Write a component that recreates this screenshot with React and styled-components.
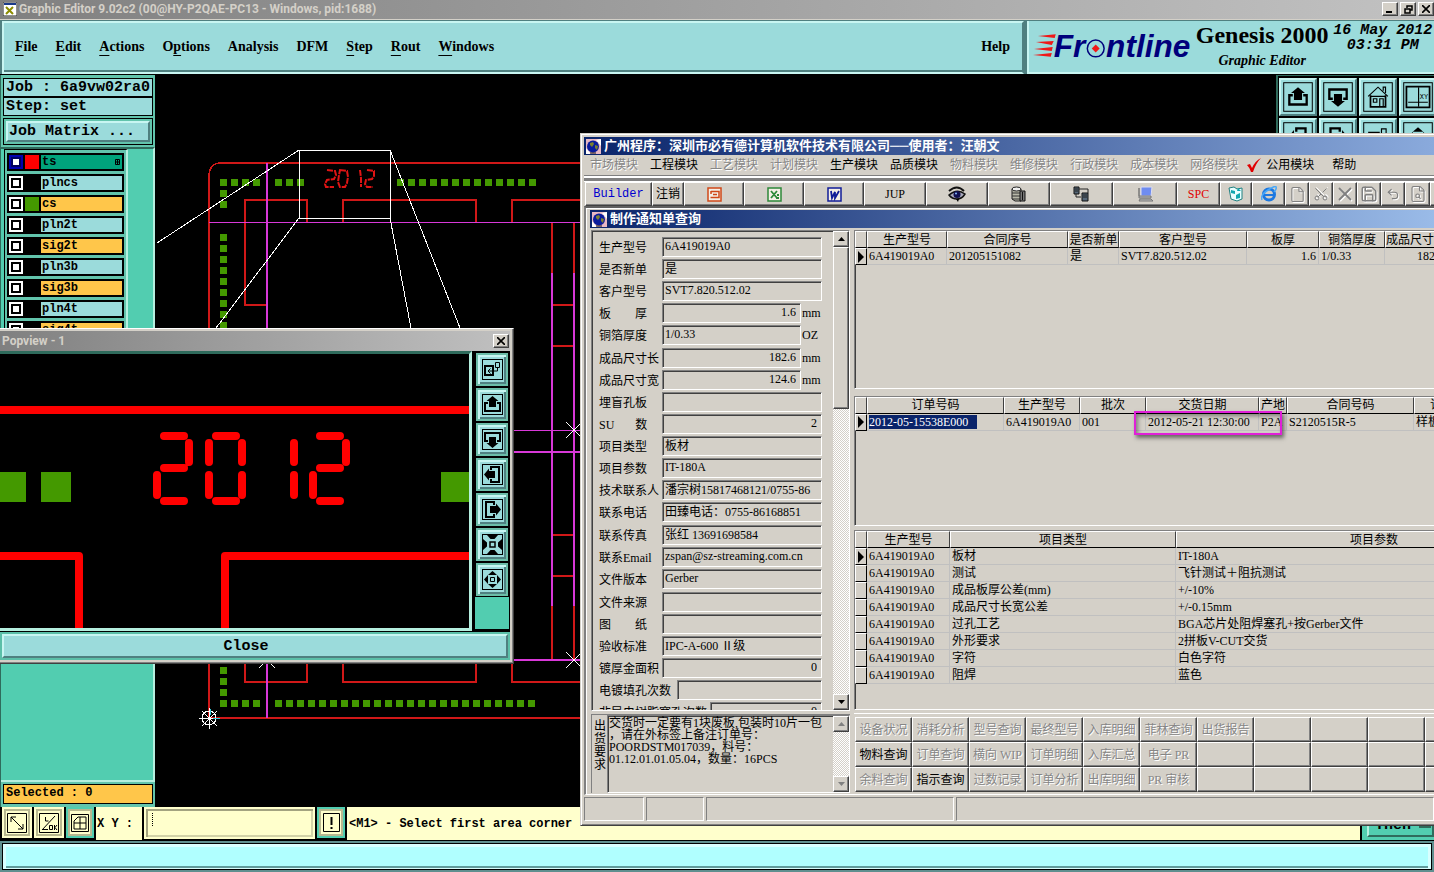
import React from "react";
import styled, { createGlobalStyle, css } from "styled-components";
import { File, Scissors, X, Save, Undo2, FileSearch, FilePlus } from "lucide-react";

const GlobalStyle = createGlobalStyle`
  * {
    box-sizing: border-box;
  }
  html, body, #root {
    margin: 0;
    height: 100%;
  }
  body {
    overflow: hidden;
    background: #000;
    color: #000;
  }
  button, input, textarea {
    font: inherit;
    color: inherit;
    margin: 0;
    padding: 0;
    border: none;
    border-radius: 0;
    background: none;
  }
`;

const aqua = "#9bdbdb";
const teal = "#52cdb0";
const face = "#d4d0c8";
const cream = "#ffffcc";
const song = `"Liberation Serif", "Noto Sans CJK SC", serif`;
const mono = `"Liberation Mono", monospace`;

const raised = css`
  border: 2px solid;
  border-color: #c8f6f2 #4f8080 #4f8080 #c8f6f2;
`;

const winRaised = css`
  border: 1px solid;
  border-color: #fff #404040 #404040 #fff;
  box-shadow: inset -1px -1px 0 #808080;
`;

const sunken = css`
  border: 1px solid;
  border-color: #808080 #fff #fff #808080;
  box-shadow: inset 1px 1px 0 #404040;
`;

const Page = styled.div`
  position: relative;
  display: flex;
  flex-direction: column;
  height: 100vh;
  overflow: hidden;
  font-family: ${mono};
`;

/* ---------- top of the editor ---------- */

const TitleBar = styled.div`
  display: flex;
  align-items: center;
  flex: none;
  height: 20px;
  padding: 0 0 1px 3px;
  gap: 2px;
  background: linear-gradient(90deg, #808080, #c2c2c2);
  border-bottom: 1px solid #d4d0c8;
  color: ${face};
  font: bold 12px/18px Roboto, sans-serif;
  white-space: nowrap;
`;

const TitleText = styled.span`
  flex: 1;
`;

const CaptionButton = styled.button`
  display: flex;
  align-items: center;
  justify-content: center;
  flex: none;
  width: 16px;
  height: 14px;
  background: ${face};
  ${winRaised}
`;

const Header = styled.div`
  display: flex;
  flex: none;
  height: 55px;
  background: #4f8080;
  border-bottom: 1px solid #000;
`;

const MenuBar = styled.nav`
  display: flex;
  align-items: center;
  flex: 1;
  margin: 1px 3px 0 2px;
  padding: 0 12px 2px 11px;
  gap: 18px;
  background: ${aqua};
  border: 2px solid;
  border-color: #c8f6f2 #4f8080 #c8f6f2 #c8f6f2;
  box-shadow: inset 0 -2px 0 #4f8080;
  font: bold 14px/18px "Liberation Serif", serif;
`;

const MenuButton = styled.button`
  margin-left: ${({ $end }) => ($end ? "auto" : "0")};
  u {
    text-underline-offset: 4px;
  }
`;

const Brand = styled.div`
  display: flex;
  flex: none;
  width: 407px;
  margin-top: 1px;
  padding-left: 4px;
  background: ${aqua};
  border-left: 2px solid #c8f6f2;
  border-bottom: 2px solid #c8f6f2;
  white-space: nowrap;
`;

const Product = styled.div`
  display: flex;
  flex-direction: column;
  align-items: center;
  width: 140px;
  font: bold 24px/28px "Liberation Serif", serif;
  em {
    font-size: 14px;
    line-height: 24px;
  }
`;

const Clock = styled.div`
  width: 104px;
  padding-top: 2px;
  text-align: center;
  font: italic bold 15px/15px ${mono};
`;

/* ---------- editor body ---------- */

const Main = styled.main`
  display: flex;
  flex: 1;
  min-height: 0;
  background: #000;
`;

const Side = styled.aside`
  display: flex;
  flex-direction: column;
  flex: none;
  width: 155px;
  margin-right: 1px;
  padding: 3px 2px 3px 2px;
  border-left: 1px solid #2f6b5c;
  background: #62c4ac;
`;

const Info = styled.div`
  height: ${({ $h }) => $h || 19}px;
  padding-left: 2px;
  border: 1px solid #000;
  background: ${({ $bg }) => $bg || aqua};
  font: bold ${({ $small }) => ($small ? "12px" : "15px")} / 17px ${mono};
  white-space: nowrap;
`;

const MatrixFrame = styled.div`
  margin-top: 2px;
  padding: 2px;
  border: 1px solid #000;
`;

const MatrixButton = styled.button`
  display: block;
  width: 100%;
  height: 21px;
  padding-left: 1px;
  background: ${aqua};
  ${raised}
  font: bold 15px/17px ${mono};
  text-align: left;
`;

const LayerArea = styled.div`
  display: flex;
  flex: 1;
  min-height: 0;
  margin: 2px -2px 2px -2px;
  border-top: 2px solid #2f6b5c;
  border-right: 2px solid #b5efdf;
  border-bottom: 2px solid #b5efdf;
  background: ${teal};
`;

const LayerList = styled.ul`
  display: flex;
  flex-direction: column;
  gap: 3px;
  width: 124px;
  height: max-content;
  margin: 0 0 0 3px;
  padding: 3px 2px;
  list-style: none;
  border: 1px solid #000;
  border-right: 2px solid #b5efdf;
  background: #62c4ac;
`;

const LayerRow = styled.li`
  display: flex;
  gap: 2px;
  height: 18px;
  padding: 2px;
  background: #000;
`;

const LayerCheck = styled.input`
  appearance: none;
  width: 14px;
  height: 14px;
  border: 2px solid ${({ $active }) => ($active ? "#0000b0" : "#fff")};
  background: #fff;
  box-shadow: inset 0 0 0 2px ${({ $active }) => ($active ? "#000060" : "#000")};
`;

const Swatch = styled.span`
  width: 14px;
  height: 14px;
  background: ${({ $color }) => $color};
`;

const LayerName = styled.label`
  display: flex;
  justify-content: space-between;
  flex: 1;
  padding: 0 2px 0 1px;
  background: ${({ $bg }) => $bg};
  font: bold 12px/14px ${mono};
`;

const Canvas = styled.svg`
  flex: 1;
  min-width: 0;
  height: 100%;
  background: #000;
`;

const Palette = styled.div`
  display: grid;
  grid-template-columns: repeat(4, 38px);
  grid-auto-rows: 38px;
  gap: 2px;
  flex: none;
  width: 158px;
  padding: 2px 0 0 1px;
  overflow: hidden;
  background: #000;
  border-top: 1px solid #2f6b5c;
  border-left: 2px solid #2f6b5c;
`;

const ToolButton = styled.button`
  display: flex;
  align-items: center;
  justify-content: center;
  background: ${aqua};
  ${raised}
`;

/* ---------- status rows ---------- */

const Prompt = styled.div`
  display: flex;
  flex: none;
  height: 33px;
  padding-left: 2px;
  gap: 2px;
  background: #000;
  font: bold 12px/16px ${mono};
`;

const PromptButton = styled.button`
  display: flex;
  align-items: center;
  justify-content: center;
  flex: none;
  width: ${({ $on }) => ($on ? 28 : 30)}px;
  height: 31px;
  background: ${cream};
  border: 2px solid ${({ $on }) => ($on ? teal : cream)};
  outline: 2px solid #b8b890;
  outline-offset: -4px;
`;

const PromptLabel = styled.label`
  display: flex;
  align-items: center;
  width: 46px;
  padding-left: 1px;
  background: ${cream};
`;

const CoordInput = styled.input`
  width: 171px;
  height: 32px;
  padding: 0 6px;
  /* dotted insertion mark */
  background: repeating-linear-gradient(#000 0 1px, ${cream} 1px 2px) 6px 4px / 1px 14px no-repeat, ${cream};
  border: 2px solid ${cream};
  box-shadow: inset 2px 2px 0 #a3a380, inset -2px -2px 0 #d3d3a8;
`;

const Message = styled.div`
  display: flex;
  align-items: center;
  flex: 1;
  padding-left: 2px;
  background: ${cream};
`;

const ThenBox = styled.div`
  width: 72px;
  padding: 0 0 3px 5px;
  background: ${teal};
`;

const ThenButton = styled.button`
  display: flex;
  align-items: center;
  gap: 8px;
  width: 100%;
  height: 100%;
  padding: 7px 0 0 6px;
  border: 2px solid;
  border-color: #b5efdf #2f6b5c #2f6b5c #b5efdf;
  font: bold 15px/18px ${mono};
`;

const Footer = styled.div`
  flex: none;
  height: 32px;
  padding: 2px;
  background: #5f8f8f;
  border-top: 1px solid #000;
`;

const FooterBar = styled.div`
  height: 27px;
  border: 1px solid #000;
  background: #d8ffff;
  padding: 3px;
  &::before {
    content: "";
    display: block;
    height: 19px;
    background: #b0ffff;
    border-bottom: 2px solid #5f9c9c;
  }
`;

/* ---------- popview window ---------- */

const Popview = styled.section`
  position: absolute;
  left: -4px;
  top: 328px;
  width: 518px;
  height: 336px;
  display: flex;
  flex-direction: column;
  padding: 2px 3px 3px;
  background: ${face};
  ${winRaised}
`;

const PopTitle = styled.div`
  display: flex;
  align-items: center;
  justify-content: space-between;
  flex: none;
  height: 20px;
  padding: 0 1px 0 2px;
  background: linear-gradient(90deg, #808080, #c0c0c0);
  color: ${face};
  font: bold 12px/18px Roboto, sans-serif;
`;

const PopBody = styled.div`
  display: flex;
  flex: 1;
  min-height: 0;
  gap: 2px;
  background: #000;
`;

const PopCanvas = styled.svg`
  flex: 1;
  min-width: 0;
  height: 100%;
  background: #000;
  border: 3px solid;
  border-color: #2f6b5c #b5efdf #b5efdf #000;
  border-left-width: 0;
`;

const PopTools = styled.div`
  display: flex;
  flex-direction: column;
  gap: 2px;
  width: 36px;
  padding: 1px 1px 0;
  border: 1px solid #000;
  border-bottom: 2px solid #000;
  background: linear-gradient(#000 245px, ${teal} 245px);
`;

const PopTool = styled.button`
  display: flex;
  align-items: center;
  justify-content: center;
  flex: none;
  height: 33px;
  background: ${aqua};
  border: 2px solid #6bbda8;
  box-shadow: inset 2px 2px 0 #c8f6f2, inset -2px -2px 0 #4f8080;
`;

const CloseFrame = styled.div`
  flex: none;
  padding: 2px;
  background: #5bbfa8;
  border-top: 1px solid #000;
`;

const CloseButton = styled.button`
  display: block;
  width: 100%;
  height: 24px;
  padding: 2px 18px 0 0;
  background: ${aqua};
  ${raised}
  font: bold 15px/18px ${mono};
`;

/* ---------- order query window ---------- */

const Erp = styled.section`
  position: absolute;
  left: 580px;
  right: 0;
  top: 133px;
  height: 693px;
  display: flex;
  flex-direction: column;
  padding: 3px 0 3px 3px;
  overflow: hidden;
  background: ${face};
  border: 1px solid ${face};
  border-right: none;
  border-bottom-color: #404040;
  box-shadow: inset 1px 1px 0 #fff, inset 0 -1px 0 #808080;
  font: 12px/14px ${song};
  white-space: nowrap;
`;

const BlueTitle = styled.div`
  display: flex;
  align-items: center;
  gap: 3px;
  flex: none;
  height: 18px;
  padding-left: 2px;
  background: linear-gradient(90deg, #0a246a, ${({ $to }) => $to});
  color: #fff;
  font-size: 13px;
  font-weight: bold;
`;

const ErpMenu = styled.nav`
  display: flex;
  align-items: center;
  gap: 12px;
  flex: none;
  height: 20px;
  padding-left: 6px;
`;

const ErpMenuItem = styled.button`
  display: flex;
  align-items: center;
  gap: 4px;
  &:disabled {
    color: #868686;
    text-shadow: 1px 1px 0 #fff;
  }
  svg {
    margin-left: -4px;
  }
`;

const Rule = styled.div`
  flex: none;
  height: 7px;
  border-top: 1px solid #808080;
  border-bottom: 1px solid #fff;
  background: linear-gradient(#fff 2px, #808080 2px, #808080 5px, #fff 5px);
`;

const ErpToolbar = styled.div`
  display: flex;
  flex: none;
  height: 24px;
  padding-left: 1px;
`;

const ErpTool = styled.button`
  display: flex;
  align-items: center;
  justify-content: center;
  flex: none;
  width: ${({ $w }) => $w}px;
  color: ${({ $color }) => $color || "#000"};
  ${winRaised}
  &:disabled {
    color: #808080;
  }
  &:disabled svg {
    filter: drop-shadow(1px 1px 0 #fff);
  }
`;

const Builder = styled.span`
  font: 12px/14px ${mono};
`;

const Child = styled.div`
  display: flex;
  flex-direction: column;
  flex: 1;
  min-height: 0;
  padding: 2px 0 1px 4px;
  border-top: 2px solid #606060;
  border-left: 2px solid #808080;
  border-bottom: 1px solid #fff;
  box-shadow: inset 1px 1px 0 #fff;
`;

const ChildBody = styled.div`
  display: flex;
  flex: 1;
  min-height: 0;
  gap: 4px;
  padding: 2px 0 0 1px;
`;

const LeftColumn = styled.div`
  display: flex;
  flex-direction: column;
  flex: none;
  gap: 3px;
  width: 259px;
`;

const FormPanel = styled.div`
  display: flex;
  flex: 1;
  min-height: 0;
  overflow: hidden;
  ${sunken}
`;

const FormScroll = styled.div`
  display: flex;
  flex-direction: column;
  gap: 3px;
  flex: 1;
  min-width: 0;
  padding: 6px 11px 0 7px;
`;

const FieldGroup = styled.div`
  display: flex;
  flex-direction: column;
  gap: 2px;
`;

const Field = styled.div`
  display: flex;
  align-items: center;
  height: 20px;
`;

const FieldLabel = styled.label`
  flex: none;
  width: ${({ $w }) => $w || 63}px;
  padding-top: 2px;
  white-space: pre;
`;

const FieldInput = styled.input`
  flex: 1;
  min-width: 0;
  height: 20px;
  padding: 0 4px 2px 2px;
  text-align: ${({ $right }) => ($right ? "right" : "left")};
  ${sunken}
`;

const Unit = styled.span`
  width: 21px;
  padding-left: 1px;
`;

const NotePanel = styled.div`
  display: flex;
  flex: none;
  height: 79px;
  border-top: 1px solid #808080;
  border-left: 1px solid #808080;
`;

const NoteLabel = styled.label`
  width: 15px;
  padding: 5px 0 0 2px;
  white-space: normal;
  line-height: 13px;
`;

const NoteBox = styled.div`
  display: flex;
  flex: 1;
  ${sunken}
`;

const NoteText = styled.textarea`
  flex: 1;
  min-width: 0;
  padding: 1px;
  resize: none;
  overflow: hidden;
  white-space: pre;
  line-height: 12px;
`;

const Scroll = styled.div`
  display: flex;
  flex-direction: column;
  flex: none;
  width: 16px;
  background: repeating-conic-gradient(#fff 0 25%, ${face} 0 50%) 0 0 / 2px 2px;
`;

const ScrollButton = styled.button`
  display: flex;
  align-items: center;
  justify-content: center;
  flex: none;
  height: 16px;
  background: ${face};
  ${winRaised}
  margin-top: ${({ $down }) => ($down ? "auto" : "0")};
  &:disabled {
    color: #808080;
  }
`;

const ScrollThumb = styled.div`
  flex: none;
  height: 162px;
  background: ${face};
  ${winRaised}
`;

const RightColumn = styled.div`
  display: flex;
  flex-direction: column;
  flex: 1;
  min-width: 0;
`;

const GridBox = styled.div`
  position: relative;
  flex: ${({ $grow }) => $grow} 1 0;
  min-height: 0;
  margin-bottom: ${({ $after }) => $after}px;
  overflow: hidden;
  ${sunken}
  border-right: none;
`;

const Table = styled.table`
  width: ${({ $w }) => $w}px;
  table-layout: fixed;
  border-collapse: separate;
  border-spacing: 0;
  th {
    height: 17px;
    padding: 0;
    overflow: hidden;
    font-weight: normal;
    border: 1px solid;
    border-color: #fff #404040 #000 #fff;
  }
  td {
    height: 17px;
    padding: 0 2px 0 2px;
    overflow: hidden;
    border-right: 1px solid #c0c0c0;
    border-bottom: 1px solid #c0c0c0;
  }
  td:first-child {
    padding: 0 0 0 1px;
    border: 1px solid;
    border-color: #fff #000 #000 #fff;
  }
`;

const Cell = styled.td`
  text-align: ${({ $right }) => ($right ? "right" : "left")};
`;

const Pointer = styled.svg`
  display: block;
`;

const Selected = styled.span`
  display: inline-block;
  width: 108px;
  color: #fff;
  background: #0a246a;
`;

const Highlight = styled.div`
  position: absolute;
  left: 279px;
  top: 14px;
  width: 148px;
  height: 24px;
  border: 2px solid #e020d8;
  box-shadow: 2px 3px 4px rgba(0, 0, 0, 0.5), inset 2px 3px 4px rgba(0, 0, 0, 0.4);
`;

const ActionPanel = styled.div`
  flex: none;
  padding: 3px 0 1px 1px;
  overflow: hidden;
  border-top: 1px solid #fff;
`;

const ActionGrid = styled.div`
  display: grid;
  grid-template-columns: repeat(11, 57px);
  grid-auto-rows: 25px;
`;

const ActionButton = styled.button`
  ${winRaised}
  &:disabled {
    color: #868686;
    text-shadow: 1px 1px 0 #fff;
  }
`;

const ErpStatus = styled.div`
  display: flex;
  flex: none;
  gap: 2px;
  height: 27px;
  padding: 2px 0 1px 0;
`;

const StatusCell = styled.div`
  width: ${({ $w }) => $w || 0}px;
  flex: ${({ $w }) => ($w ? "none" : "1")};
  border: 1px solid;
  border-color: #808080 #fff #fff #808080;
`;

/* ---------- data ---------- */

const menus = [
  ["", "F", "ile"],
  ["", "E", "dit"],
  ["", "A", "ctions"],
  ["O", "p", "tions"],
  ["Analysis", "", ""],
  ["DFM", "", ""],
  ["", "S", "tep"],
  ["", "R", "out"],
  ["", "W", "indows"],
];

const orange = "#ffc64a";

const layers = [
  { name: "ts", bg: "#00a37c", color: "#ff0000", active: true },
  { name: "plncs", bg: aqua },
  { name: "cs", bg: orange, color: "#449900" },
  { name: "pln2t", bg: aqua },
  { name: "sig2t", bg: orange },
  { name: "pln3b", bg: aqua },
  { name: "sig3b", bg: orange },
  { name: "pln4t", bg: aqua },
  { name: "sig4t", bg: orange },
];

const erpMenus = [
  ["市场模块", false],
  ["工程模块", true],
  ["工艺模块", false],
  ["计划模块", false],
  ["生产模块", true],
  ["品质模块", true],
  ["物料模块", false],
  ["维修模块", false],
  ["行政模块", false],
  ["成本模块", false],
  ["网络模块", false],
];

const fieldGroups = [
  [
    { label: "生产型号", value: "6A419019A0" },
    { label: "是否新单", value: "是" },
    { label: "客户型号", value: "SVT7.820.512.02" },
    { label: "板　　厚", value: "1.6", unit: "mm", right: true },
    { label: "铜箔厚度", value: "1/0.33", unit: "OZ" },
  ],
  [
    { label: "成品尺寸长", value: "182.6", unit: "mm", right: true },
    { label: "成品尺寸宽", value: "124.6", unit: "mm", right: true },
    { label: "埋盲孔板", value: "" },
    { label: "SU 　  数", value: "2", right: true },
    { label: "项目类型", value: "板材" },
    { label: "项目参数", value: "IT-180A" },
    { label: "技术联系人", value: "潘宗树15817468121/0755-86" },
    { label: "联系电话", value: "田臻电话：0755-86168851" },
  ],
  [
    { label: "联系传真", value: "张红 13691698584" },
    { label: "联系Email", value: "zspan@sz-streaming.com.cn" },
    { label: "文件版本", value: "Gerber" },
  ],
  [
    { label: "文件来源", value: "" },
    { label: "图　　纸", value: "" },
    { label: "验收标准", value: "IPC-A-600 Ⅱ级" },
    { label: "镀厚金面积", value: "0", right: true },
    { label: "电镀填孔次数", value: "", w: 78 },
    { label: "非导电树脂塞孔次数", value: "0", right: true, w: 111 },
  ],
];

const productTable = {
  widths: [12, 80, 121, 51, 128, 72, 66, 62],
  head: ["", "生产型号", "合同序号", "是否新单", "客户型号", "板厚", "铜箔厚度", "成品尺寸长"],
  rows: [["6A419019A0", "201205151082", "是", "SVT7.820.512.02", "1.6", "1/0.33", "182.6"]],
  right: [4, 6],
};

const orderTable = {
  widths: [12, 137, 76, 66, 113, 28, 127, 80],
  head: ["", "订单号码", "生产型号", "批次", "交货日期", "产地", "合同号码", "订单类型"],
  rows: [
    [<Selected key="s">2012-05-15538E000</Selected>, "6A419019A0", "001", "2012-05-21 12:30:00", "P2A", "S2120515R-5", "样板"],
  ],
};

const itemTable = {
  widths: [12, 83, 226, 396],
  head: ["", "生产型号", "项目类型", "项目参数"],
  rows: [
    ["6A419019A0", "板材", "IT-180A"],
    ["6A419019A0", "测试", "飞针测试＋阻抗测试"],
    ["6A419019A0", "成品板厚公差(mm)", "+/-10%"],
    ["6A419019A0", "成品尺寸长宽公差", "+/-0.15mm"],
    ["6A419019A0", "过孔工艺", "BGA芯片处阻焊塞孔+按Gerber文件"],
    ["6A419019A0", "外形要求", "2拼板V-CUT交货"],
    ["6A419019A0", "字符", "白色字符"],
    ["6A419019A0", "阻焊", "蓝色"],
  ],
};

const actions = [
  ["设备状况", "消耗分析", "型号查询", "最终型号", "入库明细", "菲林查询", "出货报告", "", "", "", ""],
  ["物料查询", "订单查询", "横向 WIP", "订单明细", "入库汇总", "电子 PR", "", "", "", "", ""],
  ["余料查询", "指示查询", "过数记录", "订单分析", "出库明细", "PR 审核", "", "", "", "", ""],
];
const enabledActions = ["物料查询", "指示查询"];

const note = `交货时一定要有1块废板,包装时10片一包
，请在外标签上备注订单号：
POORDSTM017039，料号：
01.12.01.01.05.04，数量：16PCS`;

/* ---------- drawings ---------- */

const AppIcon = () => (
  <svg width="14" height="14" viewBox="0 0 14 14">
    <rect width="14" height="14" fill="#fff" stroke="#222" />
    <rect x="1" y="1" width="12" height="2" fill="#1a3a8a" />
    <path d="M3 5l7 7M10 5l-7 7" stroke="#8c8c00" strokeWidth="2" />
  </svg>
);

const CloseGlyph = () => (
  <svg width="8" height="8" viewBox="0 0 8 8">
    <path d="M0 0l8 8M8 0L0 8" stroke="#000" strokeWidth="1.6" />
  </svg>
);

const ArrowGlyph = ({ down }) => (
  <svg width="7" height="4" viewBox="0 0 7 4">
    <path d={down ? "M0 0h7L3.500 4z" : "M0 4h7L3.500 0z"} fill="currentColor" />
  </svg>
);

const GlobeIcon = () => (
  <svg width="15" height="15" viewBox="0 0 15 15">
    <rect width="15" height="15" fill="#e8b8c4" />
    <path d="M0 15V9l5 6zM15 0v7l-5-6z" fill="#fff" />
    <circle cx="7" cy="7.500" r="6" fill="#0a1c9c" />
    <path d="M4 4l3-1 1 2-2 3-2-2zM9 6l3 1-1 4-2-2z" fill="#7b8030" />
    <path d="M4 14h6" stroke="#111" />
  </svg>
);

const FrontlineLogo = () => (
  <svg width="162" height="50" viewBox="1032 22 162 50">
    <path
      d="M1055 35l-18 2 17 2zM1053 42l-18 1 16 3zM1052 48l-19 2 18 2zM1051 54l-19 2 18 2z"
      fill="#f01818"
    />
    <g fill="#00007c" fontFamily="Liberation Sans, sans-serif" fontWeight="bold" fontStyle="italic" fontSize="32">
      <text x="1053" y="58">Fr</text>
      <text x="1106" y="58">ntline</text>
    </g>
    <circle cx="1095.500" cy="49.500" r="8.500" fill="none" stroke="#00007c" strokeWidth="1.500" />
    <path d="M1095.500 45.500l4 4-4 4-4-4z" fill="#f01818" />
  </svg>
);

const boxArrow = (
  <g>
    <path d="M6 9H3v8h15V9h-3" fill="none" stroke="#000" strokeWidth="2" />
    <path d="M10.500 2l6 5H14v6H7V7H4.500z" />
  </g>
);

const viewIcons = {
  popup: (
    <g fill="none" stroke="#000">
      <path d="M3 7h8v9H3z" strokeWidth="2" />
      <path d="M13.500 3.500h4v5h-4zM15.500 8v4H6M8.500 9.500L6 12l2.500 2.500" />
    </g>
  ),
  up: boxArrow,
  down: <g transform="rotate(180 10.500 10.500)">{boxArrow}</g>,
  left: <g transform="rotate(-90 10.500 10.500)">{boxArrow}</g>,
  right: <g transform="rotate(90 10.500 10.500)">{boxArrow}</g>,
  zoomIn: (
    <g>
      <path d="M8 8h5v5H8z" fill="none" stroke="#000" strokeWidth="1.500" />
      <path d="M5 1h11l-3.500 4h-4zM5 20h11l-3.500-4h-4zM1 5v11l4-3.500v-4zM20 5v11l-4-3.500v-4z" />
    </g>
  ),
  zoomOut: (
    <g>
      <path d="M8.500 8.500h4v4h-4z" fill="none" stroke="#000" />
      <path d="M6 6h9l-4.500-4zM6 15h9l-4.500 4zM6 6v9l-4-4.500zM15 6v9l4-4.500z" />
    </g>
  ),
  home: (
    <g fill="none" stroke="#000">
      <path d="M2 10l8.500-8L19 10M15 5V2h2v5" />
      <path d="M4 9v10h13V9" strokeWidth="1.500" />
      <path d="M4 10h13M6.500 12h3v3h-3zM12 19v-7h3v7" />
    </g>
  ),
  coords: (
    <g>
      <path d="M.500 1.500h20v18H.500z" fill="none" stroke="#000" strokeWidth="1.500" />
      <path d="M11 2v17M2 15h17" stroke="#000" />
      <text x="12" y="12" fontSize="6" fontFamily="Liberation Mono">XY</text>
    </g>
  ),
};

const ViewIcon = ({ kind, size = 21 }) => (
  <svg width={size} height={size} viewBox="0 0 21 21">
    <rect x="0.500" y="0.500" width="20" height="20" fill="none" stroke="#000" strokeWidth={21 / size} />
    <g transform={size > 21 ? "translate(2 2) scale(.81)" : undefined}>{viewIcons[kind]}</g>
  </svg>
);

const Squares = ({ points, size = 7 }) =>
  points.map(([x, y]) => <rect key={`${x}-${y}`} x={x} y={y} width={size} height={size} fill="#449900" />);

const run = (from, to, step) => {
  const out = [];
  for (let v = from; v <= to; v += step) out.push(v);
  return out;
};

const pads = [
  ...[220, 231, 242, 253, 275, 286, 297, ...run(397, 530, 11)].map((x) => [x, 179]),
  ...[190, 201, ...run(234, 333, 11), 667, 678, 689].map((y) => [220, y]),
  ...[220, 231, 242, 253, ...run(275, 530, 11)].map((x) => [x, 700]),
];

const cross = (x, y) => `M${x - 8} ${y - 8}l16 16M${x + 8} ${y - 8}l-16 16`;

const BoardView = () => (
  <Canvas>
    {/* board units start at the top left of the whole editor */}
    <g transform="translate(-156 -75)" fill="none" shapeRendering="crispEdges">
      <g stroke="#d01818" strokeWidth="2">
        <path d="M582 163H221Q209 163 209 177V718H582" strokeWidth="1.500" />
        <path d="M267 305H245V200H307V222M343 222V200H476V222M512 222V200H582" />
        <path d="M245 660V682H307V660M343 660V682H476V660M512 660V682H582" />
        <path d="M552 222V273M574 222V273M552 606V660M574 606V660" />
        <path d="M552 305H574M552 346H574M552 535H574M552 576H574" />
      </g>
      <g stroke="#d838d8">
        <path d="M209 222H582M514 430H582" />
        <path d="M267 163V718M552 273V606M574 273V606M514 452H582M514 660H582" strokeWidth="2" />
      </g>
      <Squares points={pads} />
      <g stroke="#fff">
        <path d="M299.500 150.500H390V218.500H299.500Z" />
        <path d="M157 243L299 150M299 218L216 328M390 150L460 328M390 218L411 328" />
        <path d={`${cross(574, 430)}${cross(574, 660)}${cross(267, 660)}`} />
        <path d={`M199 718.500h20M209.500 708v21M202 711l15 15M217 711l-15 15`} />
        <circle cx="209" cy="718" r="7" />
      </g>
      <path d="M210 709v6M213 718.500h7" stroke="#30c8d8" />
    </g>
    <g transform="translate(-156 -75)" fill="none" stroke="#e01414" strokeWidth="2" strokeDasharray="6 1">
      <path d="M327 170l8 1 1 4-2 4-7 1-2 4 1 3 8 0" />
      <path d="M340 170l7 1 1 6-1 6-2 4-5 0-2-5 1-7z" />
      <path d="M360 170l1 8 0 9" />
      <path d="M367 170l7 1 0 5-2 3-6 1-1 4 2 3 6 0" />
    </g>
  </Canvas>
);

const PopBoard = () => (
  <PopCanvas>
    <g transform="translate(0 -354)">
      <g fill="none" stroke="#ff0000" strokeWidth="8" strokeLinejoin="round">
        <path d="M0 410H480M0 556H79V634M225 634V556H480" />
      </g>
      <g fill="#449900">
        <path d="M0 472h26v30H0zM41 472h30v30H41zM441 472h40v30h-40z" />
      </g>
      <path
        d="M164 436h20M189 443v19M164 468h20M157 475v20M164 501h20
           M216 436h20M209 443v19M242 443v19M209 475v20M242 475v20M216 501h20
           M294 443v19M294 475v20
           M320 436h20M346 443v19M320 468h20M313 475v20M320 501h20"
        fill="none"
        stroke="#ff0000"
        strokeWidth="8"
        strokeLinecap="round"
      />
    </g>
  </PopCanvas>
);

const OfficeIcon = ({ color, kind }) => (
  <svg width="15" height="15" viewBox="0 0 15 15">
    <rect x="1" y="1" width="13" height="13" fill="#f4efe6" stroke={color} strokeWidth="1.500" />
    {kind === "P" && <path d="M4 4.500h8v6H3.500M6 7.500h4M4 4v3" fill="none" stroke={color} strokeWidth="1.500" />}
    {kind === "X" && <path d="M4 4l6 7M10 4l-6 7M9 11h3M10 8h2" stroke={color} strokeWidth="1.800" />}
    {kind === "W" && <path d="M4 4l1 7 3-6 0 6 4-7" fill="none" stroke={color} strokeWidth="1.800" />}
  </svg>
);

const EyeIcon = () => (
  <svg width="18" height="16" viewBox="0 0 18 16">
    <path d="M1 5q8-7 15 0" fill="none" stroke="#111" strokeWidth="2" />
    <path d="M1 9q8-7 16-1-3 5-8 5-5 0-8-4z" fill="#aab" stroke="#111" strokeWidth="1.500" />
    <circle cx="9" cy="8.500" r="3.500" fill="#101050" />
    <circle cx="8" cy="7.500" r="1" fill="#8bf" />
    <path d="M8 13l2 3 1-3z" />
  </svg>
);

const DatabaseIcon = () => (
  <svg width="16" height="16" viewBox="0 0 16 16">
    <path d="M1 3v10l3 2h6V3z" fill="#b8b8a8" stroke="#222" />
    <ellipse cx="5.500" cy="3" rx="4.500" ry="2" fill="#eee" stroke="#222" />
    <path d="M1 7h8M1 10h8M1 13h8" stroke="#333" />
    <path d="M9 5h5v10H9zM11.500 6v8" fill="#777" stroke="#111" />
  </svg>
);

const NetworkIcon = () => (
  <svg width="17" height="16" viewBox="0 0 17 16">
    <path d="M1 1h5v7H1zM9 7h6v8H9z" fill="#567" stroke="#111" />
    <path d="M6 3h9v4M3 8v3h5M2 3h3M2 5h3M10 9h4M10 11h4" fill="none" stroke="#222" />
  </svg>
);

const ComputerIcon = () => (
  <svg width="17" height="16" viewBox="0 0 17 16">
    <path d="M4 1h11l-1 9H4z" fill="#6f8cf0" stroke="#dde" />
    <path d="M2 2v8h12v2H2zM3 13h11l2 2H2z" fill="#bbb" stroke="#777" />
    <path d="M5 2h9l-1 7H5z" fill="#6f8cf0" />
  </svg>
);

const RecycleIcon = () => (
  <svg width="16" height="16" viewBox="0 0 16 16">
    <path d="M1 2l5-1 3 2 5-1v11l-5 2-6-2z" fill="#e8ffff" stroke="#208080" />
    <path d="M3 4l4 1v3l-4-1zM8 9l4-2v5l-4 1zM10 2l3 3h-4z" fill="#10a8b0" />
  </svg>
);

const BrowserIcon = () => (
  <svg width="16" height="16" viewBox="0 0 16 16">
    <circle cx="8" cy="8.500" r="5.500" fill="none" stroke="#1c78e0" strokeWidth="3" />
    <path d="M4 9h9" stroke="#1c78e0" strokeWidth="2" />
    <path d="M1 14Q-1 9 7 4t8-3q1 2-2 5" fill="none" stroke="#48a8f8" strokeWidth="1.500" />
  </svg>
);

const CheckMark = () => (
  <svg width="16" height="14" viewBox="0 0 16 14">
    <path d="M1 7l3-1 2 4Q9 3 15 0 10 5 7 14H5Q4 10 1 7z" fill="#e00000" />
  </svg>
);

const tools = [
  { w: 67, name: "Builder", color: "#0000d0", icon: <Builder>Builder</Builder> },
  { w: 32, name: "注销", icon: "注销" },
  { w: 60, name: "PowerPoint", icon: <OfficeIcon color="#d04818" kind="P" /> },
  { w: 60, name: "Excel", icon: <OfficeIcon color="#2c8838" kind="X" /> },
  { w: 60, name: "Word", icon: <OfficeIcon color="#101c98" kind="W" /> },
  { w: 62, name: "JUP", icon: "JUP" },
  { w: 62, name: "View", icon: <EyeIcon /> },
  { w: 62, name: "Database", icon: <DatabaseIcon /> },
  { w: 63, name: "Network", icon: <NetworkIcon /> },
  { w: 64, name: "Computer", icon: <ComputerIcon /> },
  { w: 43, name: "SPC", color: "#e00000", icon: "SPC" },
  { w: 32, name: "Refresh", icon: <RecycleIcon /> },
  { w: 33, name: "Browser", icon: <BrowserIcon /> },
  { w: 24, name: "New", off: true, icon: <File size={17} strokeWidth={1.5} /> },
  { w: 24, name: "Cut", off: true, icon: <Scissors size={16} strokeWidth={1.5} transform="rotate(-90)" /> },
  { w: 24, name: "Delete", off: true, icon: <X size={22} strokeWidth={2} /> },
  { w: 24, name: "Save", off: true, icon: <Save size={18} strokeWidth={2} /> },
  { w: 24, name: "Undo", off: true, icon: <Undo2 size={14} strokeWidth={2} /> },
  { w: 25, name: "Preview", off: true, icon: <FileSearch size={18} strokeWidth={1.5} /> },
  { w: 24, name: "Add", off: true, icon: <FilePlus size={16} strokeWidth={1.5} /> },
];

const DataTable = ({ table }) => (
  <Table $w={table.widths.reduce((a, b) => a + b, 0)}>
    <colgroup>
      {table.widths.map((w, i) => (
        <col key={i} width={w} />
      ))}
    </colgroup>
    <thead>
      <tr>
        {table.head.map((h, i) => (
          <th key={i}>{h}</th>
        ))}
      </tr>
    </thead>
    <tbody>
      {table.rows.map((row, r) => (
        <tr key={r}>
          <td>
            {r === 0 && (
              <Pointer width="8" height="12" viewBox="0 0 8 12">
                <path d="M1 0l6 6-6 6z" />
              </Pointer>
            )}
          </td>
          {row.map((value, i) => (
            <Cell key={i} $right={table.right && table.right.includes(i)}>
              {value}
            </Cell>
          ))}
        </tr>
      ))}
    </tbody>
  </Table>
);

const PopviewWindow = () => (
  <Popview>
    <PopTitle>
      Popview - 1
      <CaptionButton aria-label="Close window">
        <CloseGlyph />
      </CaptionButton>
    </PopTitle>
    <PopBody>
      <PopBoard />
      <PopTools>
        {["popup", "up", "down", "left", "right", "zoomIn", "zoomOut"].map((kind) => (
          <PopTool key={kind} aria-label={kind}>
            <ViewIcon kind={kind} />
          </PopTool>
        ))}
      </PopTools>
    </PopBody>
    <CloseFrame>
      <CloseButton>Close</CloseButton>
    </CloseFrame>
  </Popview>
);

const OrderWindow = () => (
  <Erp>
    <BlueTitle $to="#8aaadc">
      <GlobeIcon />
      广州程序：深圳市必有德计算机软件技术有限公司──使用者：汪朝文
    </BlueTitle>
    <ErpMenu>
      {erpMenus.map(([text, on]) => (
        <ErpMenuItem key={text} disabled={!on}>
          {text}
        </ErpMenuItem>
      ))}
      <ErpMenuItem>
        <CheckMark />
        公用模块
      </ErpMenuItem>
      <ErpMenuItem>&nbsp; 帮助</ErpMenuItem>
    </ErpMenu>
    <Rule />
    <ErpToolbar>
      {tools.map((t) => (
        <ErpTool key={t.name} $w={t.w} $color={t.color} disabled={t.off} aria-label={t.name}>
          {t.icon}
        </ErpTool>
      ))}
    </ErpToolbar>
    <Child>
      <BlueTitle $to="#9abbe8">
        <GlobeIcon />
        制作通知单查询
      </BlueTitle>
      <ChildBody>
        <LeftColumn>
          <FormPanel>
            <FormScroll>
              {fieldGroups.map((group, g) => (
                <FieldGroup key={g}>
                  {group.map((f) => (
                    <Field key={f.label}>
                      <FieldLabel htmlFor={f.label} $w={f.w}>
                        {f.label}
                      </FieldLabel>
                      <FieldInput id={f.label} defaultValue={f.value} $right={f.right} />
                      {f.unit && <Unit>{f.unit}</Unit>}
                    </Field>
                  ))}
                </FieldGroup>
              ))}
            </FormScroll>
            <Scroll>
              <ScrollButton aria-label="Scroll up">
                <ArrowGlyph />
              </ScrollButton>
              <ScrollThumb />
              <ScrollButton $down aria-label="Scroll down">
                <ArrowGlyph down />
              </ScrollButton>
            </Scroll>
          </FormPanel>
          <NotePanel>
            <NoteLabel htmlFor="note">出货要求</NoteLabel>
            <NoteBox>
              <NoteText id="note" defaultValue={note} />
              <Scroll>
                <ScrollButton disabled aria-label="Scroll up">
                  <ArrowGlyph />
                </ScrollButton>
                <ScrollButton $down disabled aria-label="Scroll down">
                  <ArrowGlyph down />
                </ScrollButton>
              </Scroll>
            </NoteBox>
          </NotePanel>
        </LeftColumn>
        <RightColumn>
          <GridBox $grow={159} $after={7}>
            <DataTable table={productTable} />
          </GridBox>
          <GridBox $grow={130} $after={4}>
            <DataTable table={orderTable} />
            <Highlight />
          </GridBox>
          <GridBox $grow={180} $after={3}>
            <DataTable table={itemTable} />
          </GridBox>
          <ActionPanel>
            <ActionGrid>
              {actions.flatMap((row, r) =>
                row.map((text, i) => (
                  <ActionButton key={`${r}-${i}`} disabled={!enabledActions.includes(text)}>
                    {text}
                  </ActionButton>
                ))
              )}
            </ActionGrid>
          </ActionPanel>
        </RightColumn>
      </ChildBody>
    </Child>
    <ErpStatus>
      <StatusCell $w={60} />
      <StatusCell $w={58} />
      <StatusCell $w={248} />
      <StatusCell />
    </ErpStatus>
  </Erp>
);

const App = () => {
  return (
    <Page>
      <GlobalStyle />
      <TitleBar>
        <AppIcon />
        <TitleText>Graphic Editor 9.02c2 (00@HY-P2QAE-PC13 - Windows, pid:1688)</TitleText>
        <CaptionButton aria-label="Minimize">
          <svg width="8" height="8" viewBox="0 0 8 8">
            <path d="M0 6h6v2H0z" />
          </svg>
        </CaptionButton>
        <CaptionButton aria-label="Restore">
          <svg width="9" height="9" viewBox="0 0 9 9">
            <path d="M3 3V1h5v4H6M1 4h5v4H1z" fill="none" stroke="#000" strokeWidth="1.500" />
          </svg>
        </CaptionButton>
        <CaptionButton aria-label="Close">
          <CloseGlyph />
        </CaptionButton>
      </TitleBar>
      <Header>
        <MenuBar>
          {menus.map(([before, key, after]) => (
            <MenuButton key={before + key + after}>
              {before}
              {key && <u>{key}</u>}
              {after}
            </MenuButton>
          ))}
          <MenuButton $end>Help</MenuButton>
        </MenuBar>
        <Brand>
          <FrontlineLogo />
          <Product>
            Genesis 2000
            <em>Graphic Editor</em>
          </Product>
          <Clock>
            16 May 2012
            <br />
            03:31 PM
          </Clock>
        </Brand>
      </Header>
      <Main>
        <Side>
          <Info>Job : 6a9vw02ra0</Info>
          <Info>Step: set</Info>
          <MatrixFrame>
            <MatrixButton>Job Matrix ...</MatrixButton>
          </MatrixFrame>
          <LayerArea>
            <LayerList>
              {layers.map((l) => (
                <LayerRow key={l.name}>
                  <LayerCheck type="checkbox" id={l.name} $active={l.active} />
                  <Swatch $color={l.color || "#000"} />
                  <LayerName htmlFor={l.name} $bg={l.bg}>
                    {l.name}
                    {l.active && (
                      <svg width="5" height="14" viewBox="0 0 5 14">
                        <path d="M.5 4.500h4v5h-4zM2.500 4v6M0 7h5" fill="none" stroke="#000" />
                      </svg>
                    )}
                  </LayerName>
                </LayerRow>
              ))}
            </LayerList>
          </LayerArea>
          <Info $bg={orange} $h={20} $small>
            Selected : 0
          </Info>
        </Side>
        <BoardView />
        <Palette>
          {["up", "down", "home", "coords", "left", "right", "popup", "zoomOut"].map((kind) => (
            <ToolButton key={kind} aria-label={kind}>
              <ViewIcon kind={kind} size={30} />
            </ToolButton>
          ))}
        </Palette>
      </Main>
      <Prompt>
        <PromptButton aria-label="Snap line">
          <svg width="20" height="20" viewBox="0 0 20 20">
            <path d="M.5.5h19v19H.5zM4 4l12 12M4 9V4h5M16 11v5h-5" fill="none" stroke="#000" />
          </svg>
        </PromptButton>
        <PromptButton aria-label="Angle">
          <svg width="20" height="20" viewBox="0 0 20 20">
            <path d="M.5.5h19v19H.5zM3 17L16 3M3 16.500h6M6.500 4v4h3" fill="none" stroke="#000" />
            <path d="M10.500 12.500h3v4h-3zM15.500 12v5M18 12l-2 2.500 2 2.500" fill="none" stroke="#000" />
          </svg>
        </PromptButton>
        <PromptButton $on aria-label="Grid">
          <svg width="18" height="18" viewBox="0 0 18 18">
            <path d="M.5.5h17v17H.5zM3 7l4-4h8v12H3zM9 3v12M3 9h12" fill="none" stroke="#000" />
          </svg>
        </PromptButton>
        <PromptLabel htmlFor="coords">X Y :</PromptLabel>
        <CoordInput id="coords" />
        <PromptButton $on aria-label="Alert">
          <svg width="17" height="19" viewBox="0 0 17 19">
            <path d="M.5.500h16v18H.5z" fill="none" stroke="#000" />
            <path d="M7.500 4h2v8h-2zM7.500 14h2v2h-2z" />
          </svg>
        </PromptButton>
        <Message>&lt;M1&gt; - Select first area corner</Message>
        <ThenBox>
          <ThenButton>
            Then
            <svg width="12" height="5" viewBox="0 0 12 5">
              <path d="M0 0h12v5H0z" fill="#2f6b5c" />
            </svg>
          </ThenButton>
        </ThenBox>
      </Prompt>
      <Footer>
        <FooterBar />
      </Footer>
      <PopviewWindow />
      <OrderWindow />
    </Page>
  );
};

export default App;
